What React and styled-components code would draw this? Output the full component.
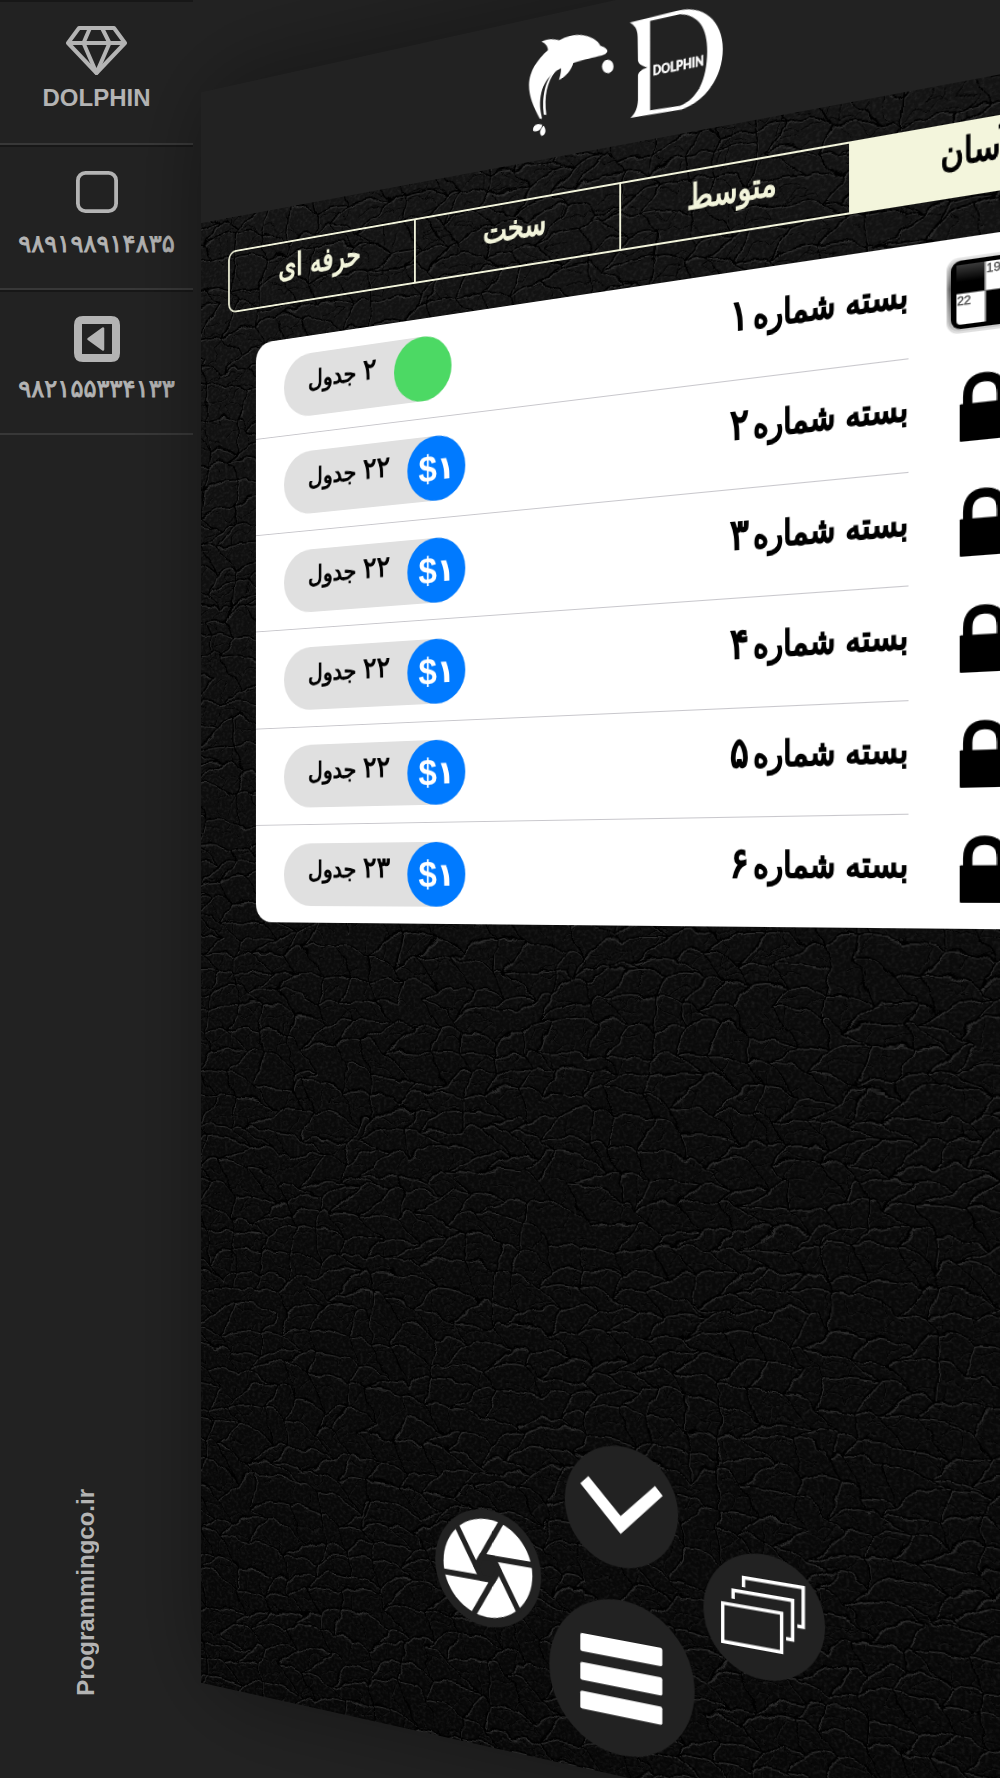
import React from "react";
import styled, { createGlobalStyle } from "styled-components";

const GlobalStyle = createGlobalStyle`
  html, body {
    margin: 0;
    background: #222;
  }
  * {
    box-sizing: border-box;
  }
`;

const persian = `"DejaVu Sans", sans-serif`;
const latin = `"Liberation Sans", Arial, sans-serif`;

const Page = styled.div`
  position: relative;
  display: flex;
  width: 1000px;
  height: 1778px;
  overflow: hidden;
  background: #222;
`;

const Sidebar = styled.aside`
  display: flex;
  flex-direction: column;
  width: 193px;
  height: 100%;
  color: #b4b4b4;
`;

const SideItem = styled.div`
  display: flex;
  flex-direction: column;
  align-items: center;
  height: 145px;
  padding-top: ${(p) => p.$top}px;
  border-top: 2px solid #171717;
  border-bottom: 2px solid #383838;

  svg {
    display: block;
    flex: none;
  }
`;

const SideLabel = styled.span`
  margin-top: ${(p) => p.$gap}px;
  font-family: ${(p) => (p.$fa ? persian : latin)};
  font-size: ${(p) => (p.$fa ? 24.3 : 24)}px;
  font-weight: ${(p) => (p.$fa ? 400 : 700)};
  line-height: 28px;
  white-space: nowrap;
  -webkit-text-stroke: ${(p) => (p.$fa ? "0.8px #b4b4b4" : "0")};
`;

const Site = styled.div`
  margin: auto 0 82px 72px;
  writing-mode: vertical-rl;
  transform: rotate(180deg);
  align-self: flex-start;
  font: 700 24px/28px ${latin};
`;

// the main screen, swung back on its left edge while the menu is open
const Screen = styled.main`
  position: absolute;
  top: 0;
  left: 0;
  display: flex;
  flex-direction: column;
  width: 1000px;
  height: 1778px;
  background: #0c0c0c;
  box-shadow: 0 0 100px rgba(0, 0, 0, 0.38);
  transform-origin: 0 0;
  transform: matrix3d(0.7081, -0.1865, 0, -0.00021012, 0, 0.8944, 0, 0, 0, 0, 1, 0, 201, 92.5, 0, 1);
`;

const Leather = styled.svg`
  position: absolute;
  inset: 0;
  width: 100%;
  height: 100%;
`;

const Header = styled.header`
  position: relative;
  display: flex;
  justify-content: center;
  height: 146px;
  background: #222;
`;

const Tabs = styled.nav`
  position: relative;
  display: flex;
  margin: 37px 36px 0;
  height: 69px;
  border: 2.5px solid #f3f5dc;
  border-radius: 10px;
  overflow: hidden;
`;

const Tab = styled.div`
  flex: 1;
  display: flex;
  justify-content: center;
  align-items: center;
  padding-bottom: 15px;
  border-left: ${(p) => (p.$first ? "0" : "2.5px solid #f3f5dc")};
  background: ${(p) => (p.$active ? "#f3f5dc" : "transparent")};
  color: ${(p) => (p.$active ? "#000" : "#f3f5dc")};
  font: 400 34px/40px ${persian};

  span {
    transform: scaleX(0.85);
    -webkit-text-stroke: 1.5px currentColor;
  }
`;

const Card = styled.section`
  position: relative;
  margin: 37.5px 71.5px 0;
  border-radius: 20px;
  background: #fff;
  overflow: hidden;
`;

const Row = styled.div`
  display: flex;
  align-items: center;
  height: 106.3px;
  padding: 0 36px;

  > svg {
    flex: none;
    margin: 2px 2px 0 -2px;
  }
`;

const Main = styled.div`
  flex: 1;
  display: flex;
  align-items: center;
  justify-content: space-between;
  height: 100%;
  margin: 0 37px 0 -36px;
  padding-left: 36px;
  border-bottom: ${(p) => (p.$last ? "0" : "1.2px solid #c8c7cc")};
`;

const Pill = styled.div`
  display: flex;
  align-items: center;
  height: 68px;
  margin-top: 2px;
  padding-left: 31px;
  border-radius: 34px;
  background: #e0e0e0;
`;

const Count = styled.span`
  margin-right: 21px;
  padding-bottom: 14px;
  font: 400 25.5px/34px ${persian};
  -webkit-text-stroke: 1px #000;

  b {
    font-weight: 400;
    font-size: 30.5px;
  }
`;

const Badge = styled.div`
  display: flex;
  justify-content: center;
  align-items: center;
  width: 68px;
  height: 68px;
  border-radius: 50%;
  background: ${(p) => (p.$free ? "#4cd964" : "#007aff")};
  color: #fff;
  font: 700 39px/40px ${latin};
  direction: ltr;

  span {
    font: 700 34px/40px ${persian};
  }
`;

const Title = styled.span`
  padding-bottom: 16px;
  font: 400 34px/44px ${persian};
  white-space: nowrap;
  transform: scaleX(0.87);
  transform-origin: 100% 50%;
  -webkit-text-stroke: 1.9px #000;

  b {
    margin-right: 5px;
    font-weight: 400;
    font-size: 41px;
  }
`;

const Fan = styled.div`
  position: relative;
  display: flex;
  justify-content: center;
  align-items: flex-start;
  gap: 9px;
  margin: auto 0 21.5px;
  left: 0.5px;
`;

const FanCenter = styled.div`
  display: flex;
  flex-direction: column;
  align-items: center;
  gap: 33px;
`;

const Round = styled.div`
  width: ${(p) => p.$size}px;
  height: ${(p) => p.$size}px;
  margin-top: ${(p) => p.$drop || 0}px;
  border-radius: 50%;
  background: #222;

  svg {
    display: block;
    width: 100%;
    height: 100%;
  }
`;

// small seeded generator so the grain is the same on every load
const seeded = (seed) => () => {
  seed = (seed * 16807) % 2147483647;
  return seed / 2147483647;
};

// a loose brick mesh that rolls up and down, used for the leather creases
const makeCreases = (seed, cw, ch, keepAcross, keepDown) => {
  const rand = seeded(seed);
  const rows = Math.ceil(1778 / ch) + 6;
  const cols = Math.ceil(1000 / cw) + 5;
  const points = [];
  for (let r = 0; r < rows; r++) {
    const line = [];
    for (let c = 0; c < cols; c++) {
      const x = (c - 1 + (r % 2) * 0.5 + (rand() - 0.5) * 0.8) * cw;
      const roll = Math.sin(x / 75 + r * 0.35) * 9 + Math.sin(x / 31 + r) * 4;
      line.push([x, (r - 2 + (rand() - 0.5) * 0.8) * ch + roll]);
    }
    points.push(line);
  }
  let d = "";
  points.forEach((line, r) => {
    line.forEach(([x, y], c) => {
      const next = line[c + 1];
      if (next && rand() < keepAcross) {
        d += `M${x.toFixed(1)} ${y.toFixed(1)}Q${((x + next[0]) / 2).toFixed(1)} ${(Math.min(y, next[1]) - 5).toFixed(1)} ${next[0].toFixed(1)} ${next[1].toFixed(1)}`;
      }
      const below = points[r + 1] && points[r + 1][c];
      if (below && rand() < keepDown) {
        d += `M${x.toFixed(1)} ${y.toFixed(1)}L${below[0].toFixed(1)} ${below[1].toFixed(1)}`;
      }
    });
  });
  return d;
};

const creases = makeCreases(77, 35, 23, 0.97, 0.9);
const fineCreases = makeCreases(1234, 19, 13, 0.4, 0.4);

const LeatherTexture = () => (
  <Leather viewBox="0 0 1000 1778">
    <defs>
      <linearGradient id="sheen" x1="0" y1="0" x2="0" y2="1">
        <stop offset="0" stopColor="#151515" />
        <stop offset="0.3" stopColor="#0f0f0f" />
        <stop offset="0.6" stopColor="#0a0a0a" />
        <stop offset="1" stopColor="#070707" />
      </linearGradient>
      <filter id="wobble" x="0" y="0" width="100%" height="100%">
        <feTurbulence type="fractalNoise" baseFrequency="0.05" numOctaves="2" seed="4" />
        <feDisplacementMap in="SourceGraphic" scale="12" xChannelSelector="R" yChannelSelector="G" />
        <feGaussianBlur stdDeviation="0.4" />
      </filter>
      <filter id="grain" x="0" y="0" width="100%" height="100%">
        <feTurbulence type="fractalNoise" baseFrequency="0.28 0.34" numOctaves="2" seed="9" />
        <feColorMatrix values="0 0 0 0 1  0 0 0 0 1  0 0 0 0 1  1.1 0 0 0 -0.48" />
      </filter>
    </defs>
    <rect width="1000" height="1778" fill="url(#sheen)" />
    <rect width="1000" height="1778" filter="url(#grain)" opacity="0.14" />
    <g fill="none" filter="url(#wobble)">
      <path d={fineCreases} stroke="#222" strokeWidth="0.9" opacity="0.7" transform="translate(0.5 1)" />
      <path d={fineCreases} stroke="#040404" strokeWidth="0.8" />
      <path d={creases} stroke="#343434" strokeWidth="1.3" opacity="0.8" transform="translate(0.9 1.6)" />
      <path d={creases} stroke="#010101" strokeWidth="1.6" />
    </g>
  </Leather>
);

const Logo = () => (
  <svg width="220" height="145" viewBox="390 0 220 145" fill="#fff">
    <g transform="matrix(.36587 .06898 0 .33822 368.86 -25.1)">
      <path d="M124 124C142 116 160 116 178 121C198 108 222 104 244 106C272 109 292 122 300 138C312 143 320 147 321 154C319 163 308 168 295 169C270 176 240 182 220 189C215 210 197 230 177 240C181 226 184 214 183 205C150 222 117 255 120 320C121 335 124 346 126 357L119 357C100 322 86 290 86 255C87 212 112 178 144 150C143 138 136 130 124 124Z" />
      <path d="M164 213C136 238 124 290 131 345L139 345C131 290 141 245 167 213Z" />
      <path d="M127 376C108 368 96 380 99 394C113 398 123 391 127 376Z" />
      <path d="M131 378C140 392 137 404 125 409C115 400 121 388 131 378Z" />
      <ellipse cx="322" cy="200" rx="17" ry="20" />
    </g>
    <g transform="matrix(.34607 .06696 0 .32894 375.97 -22.25)">
      <path
        fillRule="evenodd"
        d="M388 66L530 33C610 12 667 64 667 148C667 230 615 304 545 328L390 355C405 341 412 325 413 300L413 225C417 212 428 207 442 203C428 199 415 193 413 182L412 110C411 85 403 75 388 66ZM450 62L450 332L540 317C592 296 620 240 621 155C621 85 596 44 540 43Z"
      />
    </g>
    <text
      x="534.500"
      y="83"
      fontFamily="Lato, sans-serif"
      fontWeight="900"
      fontSize="13"
      stroke="#fff"
      strokeWidth="0.4"
      textLength="53"
      lengthAdjust="spacingAndGlyphs"
    >
      DOLPHIN
    </text>
  </svg>
);

const Crossword = () => (
  <svg width="69" height="72" viewBox="0 0 69 72">
    <defs>
      <linearGradient id="rim" x1="0" y1="0" x2="0" y2="1">
        <stop offset="0" stopColor="#ddd" />
        <stop offset="0.4" stopColor="#666" />
        <stop offset="1" stopColor="#ccc" />
      </linearGradient>
      <linearGradient id="gloss" x1="0" y1="0" x2="0" y2="1">
        <stop offset="0" stopColor="#3a3a3a" />
        <stop offset="0.6" stopColor="#000" />
      </linearGradient>
    </defs>
    <rect x="0" y="0" width="69" height="70" rx="11" fill="url(#rim)" opacity="0.6" />
    <rect x="1.500" y="1.500" width="66" height="66.500" rx="10" fill="url(#rim)" />
    <rect x="4" y="3" width="62" height="63" rx="9" fill="#000" />
    <rect x="9" y="7" width="52" height="55" rx="4" fill="#fff" />
    <rect x="9" y="7" width="25.500" height="26" fill="url(#gloss)" />
    <rect x="35.500" y="34" width="25.500" height="28" />
    <path d="M35 7V62M9 33.500H61" stroke="#777" strokeWidth="1" />
    <g fontFamily="Liberation Sans, sans-serif" fontSize="11.500" fill="#444" stroke="#444" strokeWidth="0.3">
      <text x="36" y="17">19</text>
      <text x="9.500" y="44">22</text>
    </g>
  </svg>
);

const Lock = () => (
  <svg width="69" height="72" viewBox="0 0 69 72">
    <path d="M19.200 32V23C19.200 11.500 25 6.500 34.500 6.500S49.800 11.500 49.800 23V32" fill="none" stroke="#000" strokeWidth="8.500" />
    <rect x="12" y="29.500" width="45" height="34.500" rx="1" />
  </svg>
);

const Diamond = () => (
  <svg width="61" height="50" viewBox="0 0 61 50" fill="none" stroke="#b4b4b4" strokeWidth="4" strokeLinejoin="round">
    <path d="M13 2H48L59 17L30.500 47L2 17Z" />
    <path d="M2 17H59M24 2L17.500 17L30.500 47L43.500 17L36 2" />
  </svg>
);

const SquareIcon = () => (
  <svg width="42" height="42" viewBox="0 0 42 42">
    <rect x="1.900" y="1.900" width="38.200" height="38.200" rx="7.500" fill="none" stroke="#b4b4b4" strokeWidth="3.800" />
  </svg>
);

const BackIcon = () => (
  <svg width="46" height="46" viewBox="0 0 46 46" fill="#b4b4b4">
    <path fillRule="evenodd" d="M9 0H37Q46 0 46 9V37Q46 46 37 46H9Q0 46 0 37V9Q0 0 9 0ZM8 8V38H38V8Z" />
    <path d="M14.500 23L29 12.500V33.500Z" stroke="#b4b4b4" strokeWidth="2.500" strokeLinejoin="round" />
  </svg>
);

const Aperture = () => (
  <svg viewBox="-60 -60 120 120">
    <circle r="50.400" fill="#fff" />
    <g stroke="#222" strokeWidth="6">
      {[0, 60, 120, 180, 240, 300].map((a) => (
        <path key={a} d="M-12.900 0L16.500 -51" transform={`rotate(${a})`} />
      ))}
      <path d="M12.900 0L6.450 11.200H-6.450L-12.900 0L-6.450 -11.200H6.450Z" fill="#222" />
    </g>
  </svg>
);

const Chevron = () => (
  <svg viewBox="0 0 120.800 120.800">
    <path d="M17 43L25.700 34.500L60.500 69.700L96.800 34.500L104.900 43.300L60.500 87.700Z" fill="#fff" />
  </svg>
);

const Stack = () => (
  <svg viewBox="0 0 120.800 120.800" fill="none" stroke="#fff" strokeWidth="3.400">
    <path d="M19.700 53.900H78.600V91.200H19.700Z" />
    <path d="M30.200 48V39.700H89.400V77.500H83" />
    <path d="M40.700 35V25.700H99.800V63.500H94" />
  </svg>
);

const Bars = () => (
  <svg viewBox="0 0 154.600 154.600" fill="#fff">
    <rect x="34" y="40" width="87.500" height="18.300" rx="2" />
    <rect x="34" y="69.200" width="87.500" height="18" rx="2" />
    <rect x="34" y="98.300" width="87.500" height="18" rx="2" />
  </svg>
);

const tabs = ["حرفه ای", "سخت", "متوسط", "آسان"];

const packs = [
  { no: "۱", count: "۲", free: true },
  { no: "۲", count: "۲۲" },
  { no: "۳", count: "۲۲" },
  { no: "۴", count: "۲۲" },
  { no: "۵", count: "۲۲" },
  { no: "۶", count: "۲۳" },
];

const PackRow = ({ pack, last }) => (
  <Row>
    <Main $last={last}>
      <Pill>
        <Count dir="rtl">
          <b>{pack.count}</b> جدول
        </Count>
        <Badge $free={pack.free}>
          {!pack.free && (
            <>
              $<span>۱</span>
            </>
          )}
        </Badge>
      </Pill>
      <Title dir="rtl">
        بسته شماره<b>{pack.no}</b>
      </Title>
    </Main>
    {pack.free ? <Crossword /> : <Lock />}
  </Row>
);

const App = () => (
  <>
    <GlobalStyle />
    <Page>
      <Sidebar>
        <SideItem $top={24}>
          <Diamond />
          <SideLabel $gap={8}>DOLPHIN</SideLabel>
        </SideItem>
        <SideItem $top={24}>
          <SquareIcon />
          <SideLabel $gap={17} $fa>۹۸۹۱۹۸۹۱۴۸۳۵</SideLabel>
        </SideItem>
        <SideItem $top={24}>
          <BackIcon />
          <SideLabel $gap={13} $fa>۹۸۲۱۵۵۳۳۴۱۳۳</SideLabel>
        </SideItem>
        <Site>Programmingco.ir</Site>
      </Sidebar>
      <Screen>
        <LeatherTexture />
        <Header>
          <Logo />
        </Header>
        <Tabs>
          {tabs.map((name, i) => (
            <Tab key={name} $first={i === 0} $active={i === 3} dir="rtl">
              <span>{name}</span>
            </Tab>
          ))}
        </Tabs>
        <Card>
          {packs.map((pack, i) => (
            <PackRow key={pack.no} pack={pack} last={i === packs.length - 1} />
          ))}
        </Card>
        <Fan>
          <Round $size={120.8} $drop={85}>
            <Aperture />
          </Round>
          <FanCenter>
            <Round $size={120.8}>
              <Chevron />
            </Round>
            <Round $size={154.6}>
              <Bars />
            </Round>
          </FanCenter>
          <Round $size={120.8} $drop={85}>
            <Stack />
          </Round>
        </Fan>
      </Screen>
    </Page>
  </>
);

export default App;
